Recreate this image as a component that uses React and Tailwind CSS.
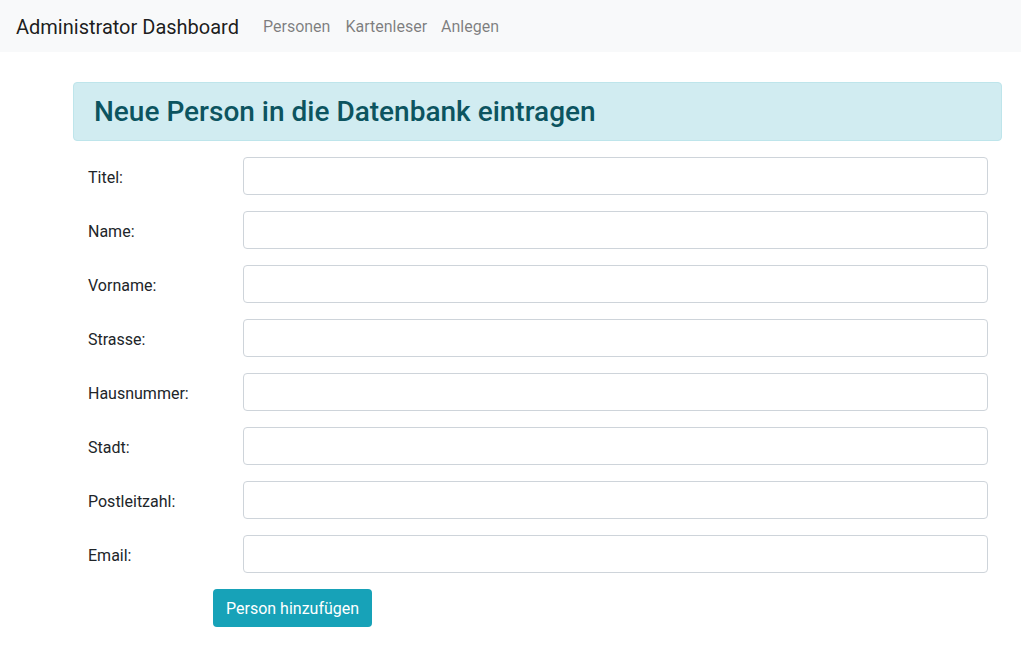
const fields = ['Titel:', 'Name:', 'Vorname:', 'Strasse:', 'Hausnummer:', 'Stadt:', 'Postleitzahl:', 'Email:'];

export default function App() {
  return (
    <div className="min-h-screen bg-white font-['Roboto',sans-serif] text-[#212529]">
      <nav className="h-[52px] bg-[#f8f9fa] flex items-center px-4">
        <span className="text-[20px] text-black/90 mr-4 leading-[30px] pt-[1px]">Administrator Dashboard</span>
        <a className="pl-2 pr-2 text-base text-black/50 pt-[1px]">Personen</a>
        <a className="px-[7px] text-base text-black/50 pt-[1px]">Kartenleser</a>
        <a className="px-[7px] text-base text-black/50 pt-[1px]">Anlegen</a>
      </nav>

      <div className="ml-[73px] w-[929px] pt-[30px]">
        <div className="bg-[#d1ecf1] border border-[#bee5eb] rounded-[4px] px-5 h-[59px] flex items-center mb-4">
          <h3 className="text-[28px] font-medium text-[#0c5460] leading-none">Neue Person in die Datenbank eintragen</h3>
        </div>

        <form className="px-[15px] pr-[14px]">
          {fields.map((label) => (
            <div key={label} className="flex items-start mb-4">
              <label className="w-[155px] text-base leading-6 pt-[9px]">{label}</label>
              <input
                type="text"
                className="flex-1 h-[38px] border border-[#ced4da] rounded-[4px] px-3 bg-white outline-none"
              />
            </div>
          ))}
          <button
            type="button"
            className="ml-[125px] h-[38px] px-[13px] pt-[2px] bg-[#17a2b8] text-white text-base rounded-[4px]"
          >
            Person hinzufügen
          </button>
        </form>
      </div>
    </div>
  );
}
